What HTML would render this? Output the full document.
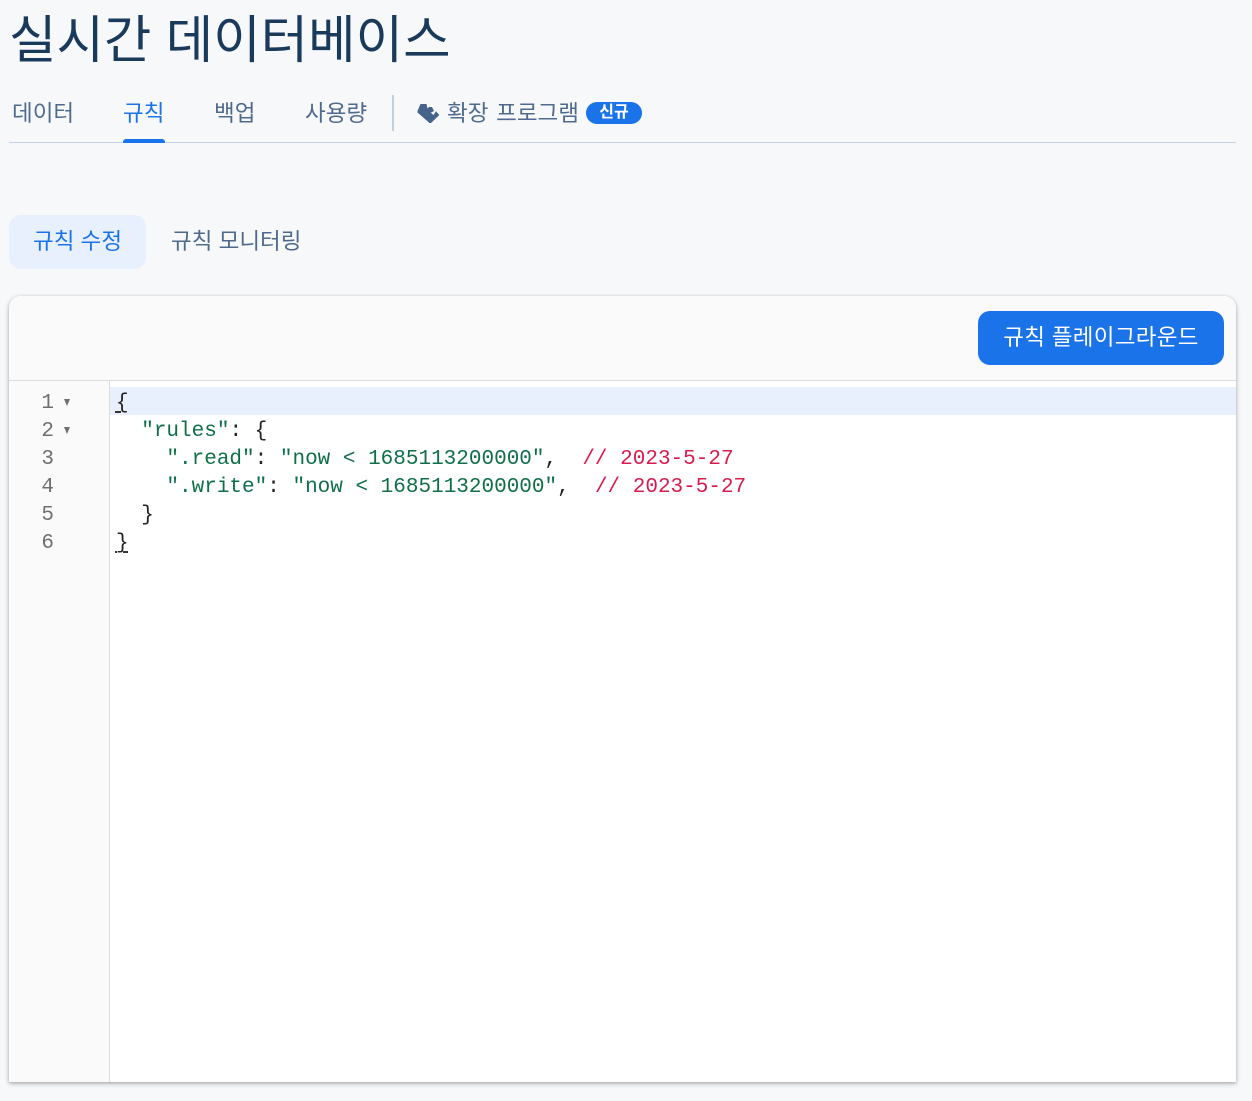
<!DOCTYPE html>
<html lang="ko"><head><meta charset="utf-8"><title>실시간 데이터베이스</title>
<style>
html,body{margin:0;padding:0;width:1252px;height:1101px;overflow:hidden;background:#f6f8fa}
body{font-family:"Liberation Sans","Noto Sans CJK KR",sans-serif;position:relative}
.a{position:absolute;white-space:nowrap}
.tab{top:98px;font-size:22.5px;line-height:32px;color:#4f6a8c}
.mono{font-family:"Liberation Mono",monospace;font-size:21px;line-height:28px}
.ln{left:10px;width:44px;text-align:right;color:#6f6f6f;font-family:"Liberation Mono",monospace;font-size:21px;line-height:28px}
.tri{left:64px;width:0;height:0;border-left:3.5px solid transparent;border-right:3.5px solid transparent;border-top:7px solid #6f6f6f}
.code{left:116px;color:#222;white-space:pre}
.g{color:#0f7048}.r{color:#d81b4d}
</style></head><body>
<div class="a" style="left:9px;top:5px;font-size:51.6px;line-height:70px;color:#1a3a5c">실시간 데이터베이스</div>

<div class="a tab" style="left:12px">데이터</div>
<div class="a tab" style="left:123px;color:#1a73e8">규칙</div>
<div class="a tab" style="left:214px">백업</div>
<div class="a tab" style="left:305px">사용량</div>
<div class="a" style="left:392px;top:95px;width:2px;height:36px;background:#c3d0e0"></div>
<svg class="a" style="left:416px;top:102px" width="25" height="23" viewBox="0 0 25 23"><path fill="#46648a" d="M1.500 9 4.500 2H10.500L11.500 6.500 13 5H16L18 9 14.700 10.700 17.500 13 20 9.300 23.300 13 15 21H13.500L1.500 10.500Z"/></svg>
<div class="a tab" style="left:447px;word-spacing:1.5px">확장 프로그램</div>
<div class="a" style="left:586px;top:102px;width:56px;height:22px;border-radius:11px;background:#1a73e8;color:#fff;font-size:16px;font-weight:bold;line-height:22px;text-align:center">신규</div>
<div class="a" style="left:9px;top:142px;width:1227px;height:1px;background:#c5d3e6"></div>
<div class="a" style="left:123px;top:139px;width:42px;height:4px;background:#1a73e8;border-radius:3px 3px 0 0"></div>

<div class="a" style="left:9px;top:215px;width:137px;height:54px;background:#e8f0fe;border-radius:12px"></div>
<div class="a" style="left:33px;top:226px;font-size:22.5px;line-height:32px;color:#1a73e8">규칙 수정</div>
<div class="a" style="left:171px;top:226px;font-size:22.5px;line-height:32px;color:#4f6a8c">규칙 모니터링</div>

<div class="a" style="left:9px;top:296px;width:1227px;height:786px;background:#fff;border-radius:12px 12px 0 0;box-shadow:0 1px 3px rgba(60,64,67,.35),0 2px 6px rgba(60,64,67,.18);overflow:hidden">
  <div class="a" style="left:0;top:0;width:1227px;height:84px;background:#fafafa;border-bottom:1px solid #dcdcdc"></div>
  <div class="a" style="left:0;top:85px;width:100px;height:701px;background:#fafafa;border-right:1px solid #dcdcdc"></div>
  <div class="a" style="left:101px;top:91px;width:1126px;height:28px;background:#e8f0fe"></div>
</div>
<div class="a" style="left:978px;top:311px;width:246px;height:54px;background:#1a73e8;border-radius:12px;color:#fff;font-size:22.5px;letter-spacing:.3px;line-height:53px;text-align:center">규칙 플레이그라운드</div>

<div class="a ln" style="top:390px">1</div><div class="a tri" style="top:399px"></div>
<div class="a ln" style="top:418px">2</div><div class="a tri" style="top:427px"></div>
<div class="a ln" style="top:446px">3</div>
<div class="a ln" style="top:474px">4</div>
<div class="a ln" style="top:502px">5</div>
<div class="a ln" style="top:530px">6</div>

<div class="a mono code" style="top:390px">{</div>
<div class="a mono code" style="top:418px">  <span class="g">"rules"</span>: {</div>
<div class="a mono code" style="top:446px">    <span class="g">".read"</span>: <span class="g">"now &lt; 1685113200000"</span>,  <span class="r">// 2023-5-27</span></div>
<div class="a mono code" style="top:474px">    <span class="g">".write"</span>: <span class="g">"now &lt; 1685113200000"</span>,  <span class="r">// 2023-5-27</span></div>
<div class="a mono code" style="top:502px">  }</div>
<div class="a mono code" style="top:530px">}</div>
<div class="a" style="left:115px;top:411px;width:6px;height:2px;background:#333"></div>
<div class="a" style="left:115px;top:551px;width:2px;height:2px;background:#333"></div>
<div class="a" style="left:123px;top:551px;width:5px;height:2px;background:#333"></div>
</body></html>
